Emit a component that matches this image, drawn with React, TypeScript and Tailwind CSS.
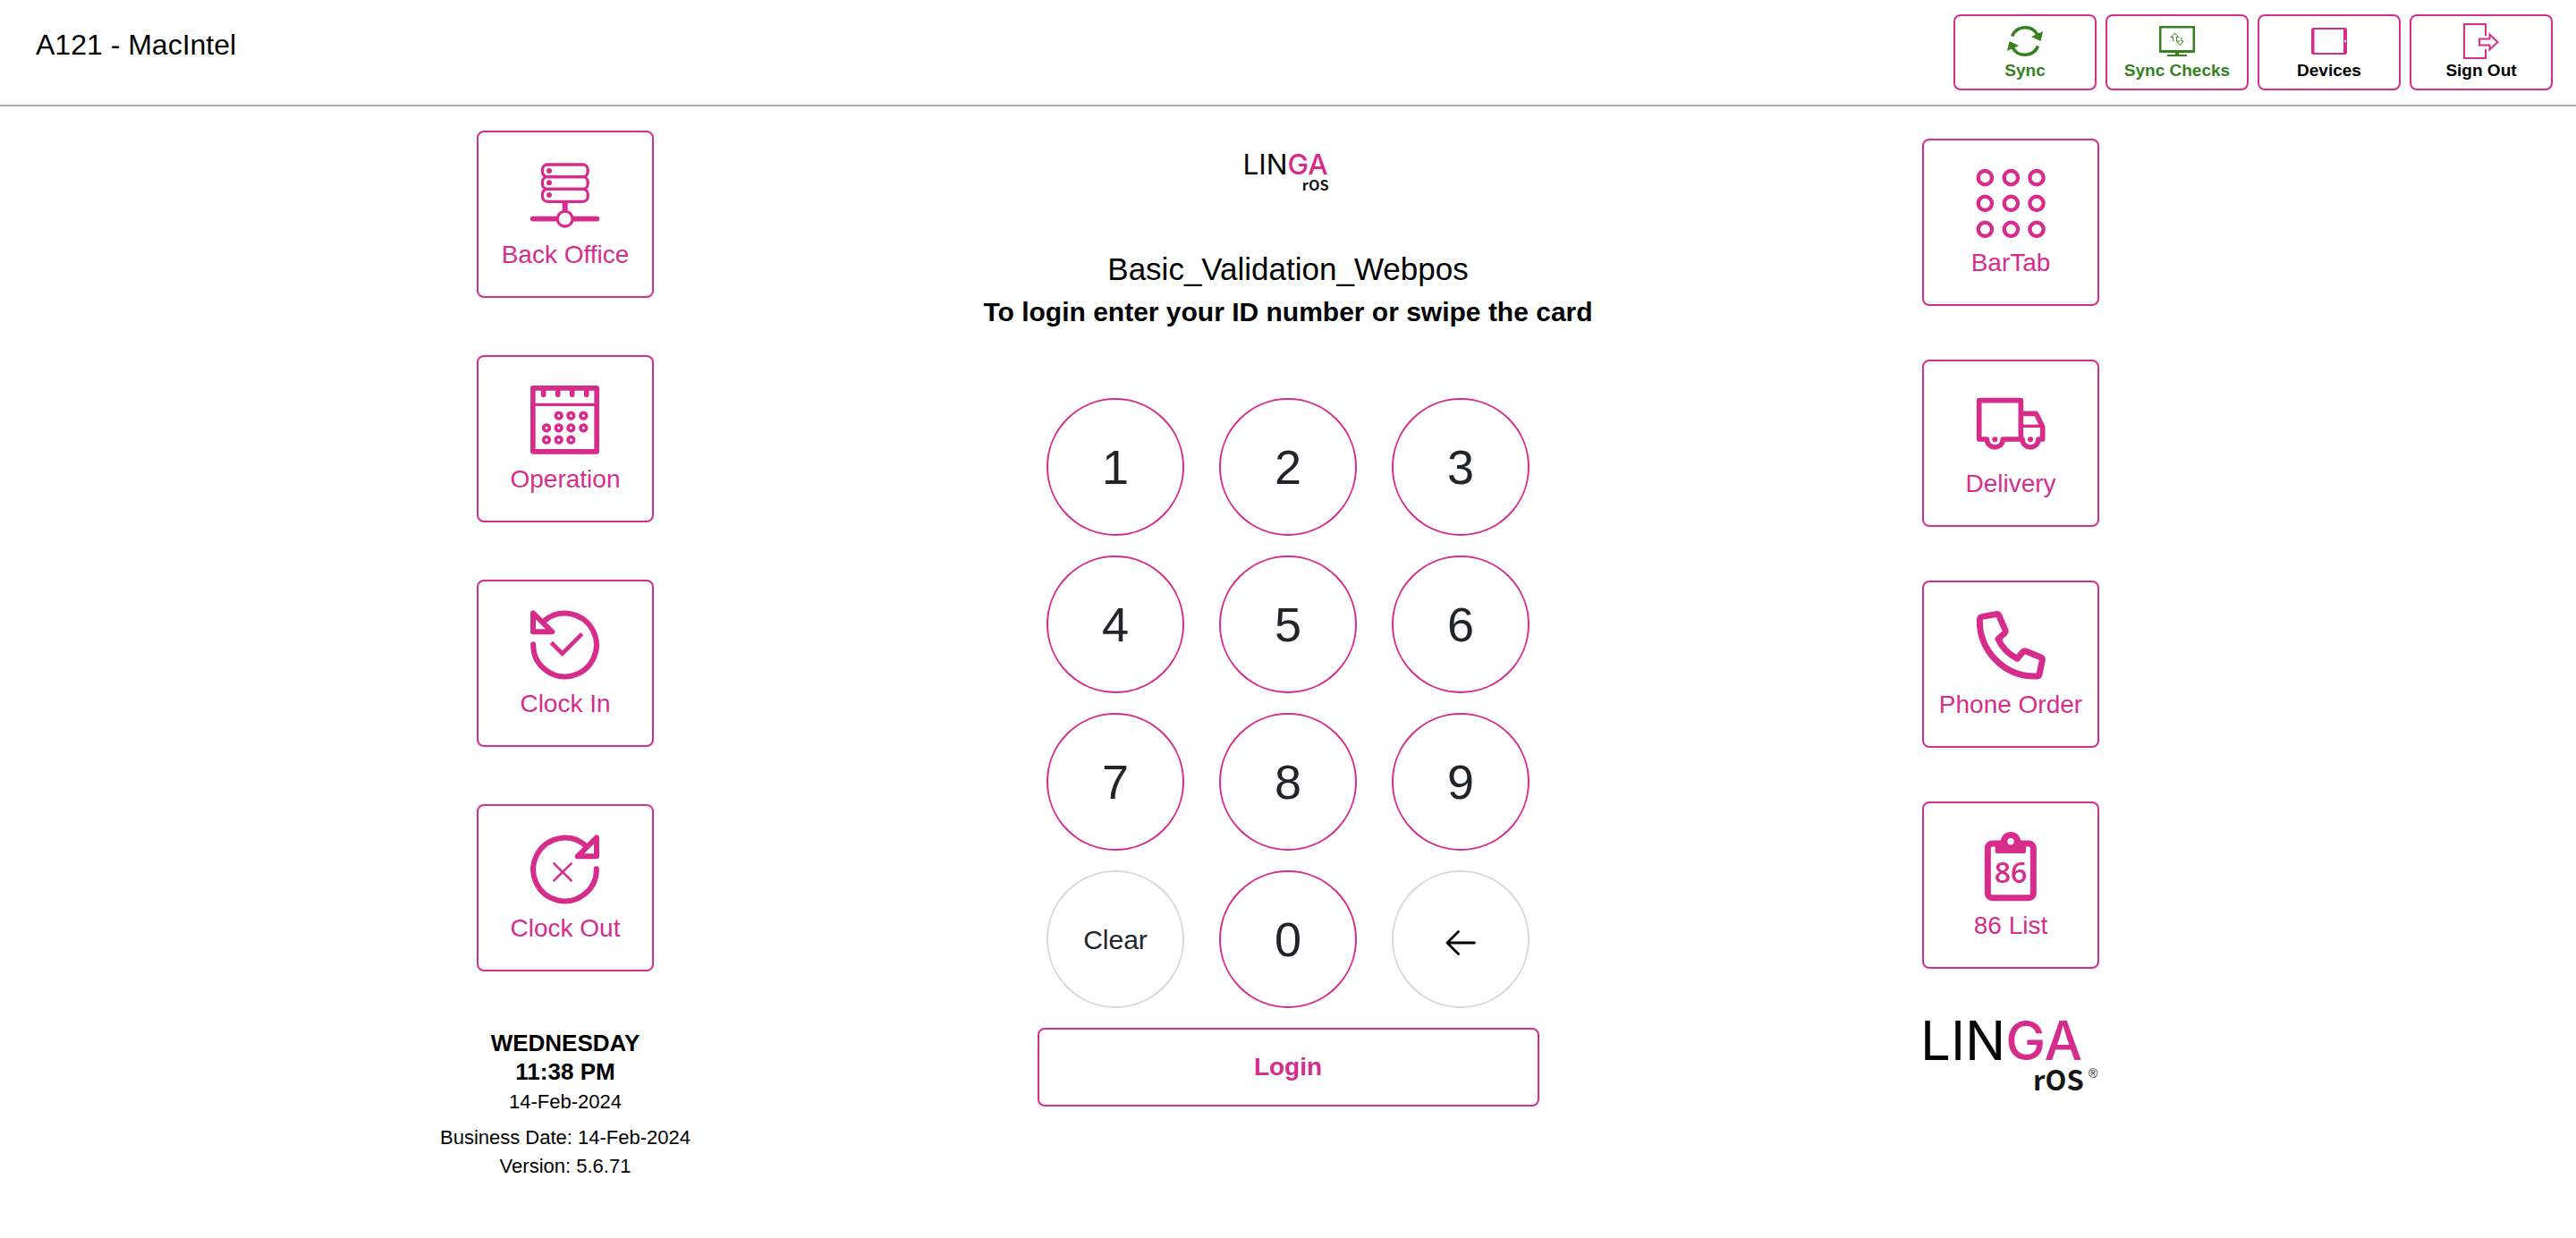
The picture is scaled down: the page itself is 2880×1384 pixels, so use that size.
import type { ReactNode } from "react";

const PINK = "#d62d8c";

function SyncIcon() {
  return (
    <svg viewBox="0 0 40 36" className="h-9 w-10" aria-hidden="true">
      <g fill="none" stroke="currentColor" strokeWidth="3.600">
        <path d="M5.500 12.500 A15.800 15.800 0 0 1 34 11" />
        <path d="M34.500 23.500 A15.800 15.800 0 0 1 6 25" />
      </g>
      <path d="M40 7 L37.500 18 L27 13 Z M0 29 L2.500 18 L13 23 Z" fill="currentColor" />
    </svg>
  );
}

function MonitorIcon() {
  return (
    <svg viewBox="0 0 40 36" className="h-9 w-10" aria-hidden="true">
      <path
        fillRule="evenodd"
        fill="currentColor"
        d="M1 1 H39 Q40 1 40 2 V30 Q40 31 39 31 H22 V33 H31 V35 H9 V33 H18 V31 H1 Q0 31 0 30 V2 Q0 1 1 1 Z M2.500 3.500 V28 H37.500 V3.500 Z"
      />
      <path
        fill="none"
        stroke="currentColor"
        strokeWidth="1"
        d="M15.500 18 V13.500 H13 L17.500 9 L21.500 13.500 H19.500 V18 H23 M19.500 13.500 V18 L23.500 22.500 L27 18 H25 V13.500"
      />
    </svg>
  );
}

function TabletIcon() {
  return (
    <svg viewBox="0 0 40 36" className="h-9 w-10" aria-hidden="true">
      <path
        fillRule="evenodd"
        fill={PINK}
        d="M2.500 3 H37.500 Q40 3 40 5.500 V30.500 Q40 33 37.500 33 H2.500 Q0 33 0 30.500 V5.500 Q0 3 2.500 3 Z M3.500 5 V31 H36 V5 Z M38 16.800 A1.200 1.200 0 1 0 38 19.200 A1.200 1.200 0 1 0 38 16.800 Z"
      />
    </svg>
  );
}

function SignOutIcon() {
  return (
    <svg viewBox="0 0 40 40" className="h-10 w-10" aria-hidden="true">
      <g fill="none" stroke={PINK} strokeWidth="2">
        <path d="M25 14 V1 H1 V39 H25 V29" />
        <path d="M18 17.500 H29.500 V12.500 L38.500 21 L29.500 29.500 V24.500 H18 Z" />
      </g>
    </svg>
  );
}

function TileSvg({ children }: { children: ReactNode }) {
  return (
    <svg viewBox="0 0 234 234" className="size-[78px]" fill="none" stroke="currentColor" aria-hidden="true">
      {children}
    </svg>
  );
}

function BackOfficeIcon() {
  return (
    <TileSvg>
      <g strokeWidth="10">
        <rect x="40.500" y="12" width="152" height="41" rx="17" />
        <rect x="40.500" y="53" width="152" height="41" rx="17" />
        <rect x="40.500" y="94" width="152" height="42" rx="17" />
        <circle cx="116" cy="194" r="25" />
      </g>
      <g fill="currentColor" stroke="none">
        <circle cx="63" cy="33" r="9" />
        <circle cx="63" cy="73" r="9" />
        <circle cx="63" cy="114" r="9" />
      </g>
      <path d="M116 138 V168" strokeWidth="18" />
      <path d="M8 194 H84 M148 194 H223" strokeWidth="17" strokeLinecap="round" />
      <circle cx="116" cy="194" r="20" fill="white" stroke="none" />
    </TileSvg>
  );
}

const calendarDays = [
  [95, 101], [136, 101], [178, 101],
  [54, 142], [95, 142], [136, 142], [178, 142],
  [54, 182], [95, 182], [136, 182],
];

function CalendarIcon() {
  return (
    <TileSvg>
      <rect x="8.500" y="8.500" width="214" height="213" strokeWidth="17" strokeLinejoin="round" />
      <path d="M10 64 H222" strokeWidth="10" />
      <path d="M44 10 V31 M92 10 V31 M140 10 V31 M188 10 V31" strokeWidth="17" strokeLinecap="round" />
      {calendarDays.map(([x, y]) => (
        <circle key={`${x}-${y}`} cx={x} cy={y} r="10" strokeWidth="11" />
      ))}
    </TileSvg>
  );
}

function ClockInIcon() {
  return (
    <TileSvg>
      <path d="M9.500 115 A106 106 0 1 0 46 37" strokeWidth="18" strokeLinecap="round" />
      <path d="M9 10 V73 H73 Z" strokeWidth="18" strokeLinejoin="round" />
      <path d="M70 109 L107 146 L173 80" strokeWidth="14" />
    </TileSvg>
  );
}

function ClockOutIcon() {
  return (
    <TileSvg>
      <path d="M221.500 115 A106 106 0 1 1 185 37" strokeWidth="18" strokeLinecap="round" />
      <path d="M222 10 V73 H158 Z" strokeWidth="18" strokeLinejoin="round" />
      <path d="M79 97 L137 154 M137 97 L79 154" strokeWidth="8" strokeLinecap="round" />
    </TileSvg>
  );
}

function BarTabIcon() {
  return (
    <TileSvg>
      {[29, 115, 202].map((y) =>
        [31, 118, 204].map((x) => <circle key={`${x}-${y}`} cx={x} cy={y} r="23" strokeWidth="13" />),
      )}
    </TileSvg>
  );
}

function TruckIcon() {
  return (
    <TileSvg>
      <path
        d="M151 165 V35 H11 V165 H37 C39 201 89 201 91 165 H156 C158 201 208 201 210 165 H224 V124 L202 79 H151"
        strokeWidth="17"
        strokeLinejoin="round"
      />
      <path d="M158 121 H222" strokeWidth="10" />
      <circle cx="64" cy="166" r="9" fill="currentColor" stroke="none" />
      <circle cx="183" cy="166" r="9" fill="currentColor" stroke="none" />
    </TileSvg>
  );
}

function PhoneIcon() {
  return (
    <TileSvg>
      <path
        d="M13 32 Q13 21 22 19 L68 11 Q75 10 78 16 L99 65 Q100 71 96 75 L75 94 C86 119 110 145 139 160 L157 138 Q162 133 168 135 L217 155 Q224 158 223 165 L213 213 Q212 219 205 219 C92 222 12 130 13 32 Z"
        strokeWidth="21"
        strokeLinejoin="round"
      />
    </TileSvg>
  );
}

function ClipboardIcon() {
  return (
    <TileSvg>
      <rect x="40" y="39" width="153" height="182" rx="15" strokeWidth="21" />
      <g fill="currentColor" stroke="none">
        <path d="M65 30 H168 V66 Q168 72 162 72 H71 Q65 72 65 66 Z" />
        <circle cx="117" cy="34" r="34" />
        <circle cx="117" cy="32" r="11" fill="white" />
        <text x="117" y="171" textAnchor="middle" fontSize="96" fontWeight="600" fontFamily="'Open Sans', 'Noto Sans', sans-serif">
          86
        </text>
      </g>
    </TileSvg>
  );
}

function Logo({ className, registered = false }: { className: string; registered?: boolean }) {
  return (
    <svg viewBox={registered ? "0 0 200 104" : "0 0 190 104"} className={className} role="img" aria-label="LINGA rOS">
      <text x="-1" y="62" fontFamily="Inter, sans-serif" fontSize="60" fontWeight="400" fill="#060808">
        LIN<tspan fill={PINK} fontWeight="500">GA</tspan>
      </text>
      <text x="125" y="96" fontFamily="'Noto Sans CJK JP', sans-serif" fontSize="31" fontWeight="700" fill="#161414">
        rOS
      </text>
      {registered && (
        <text x="187" y="82" fontFamily="'Liberation Sans', sans-serif" fontSize="14" fill="#161414">
          ®
        </text>
      )}
    </svg>
  );
}

function HeaderButton({ label, tone, icon }: { label: string; tone: string; icon: ReactNode }) {
  return (
    <button
      type="button"
      className={`flex h-[85px] w-40 flex-col items-center justify-end rounded-lg border-2 border-[#d62d8c] bg-white pb-2 ${tone}`}
    >
      <span className="flex h-10 items-center">{icon}</span>
      <span className="mt-px text-[19px] leading-6 font-bold">{label}</span>
    </button>
  );
}

function Tile({ label, icon }: { label: string; icon: ReactNode }) {
  return (
    <button
      type="button"
      className="flex h-[187px] w-[198px] flex-col items-center rounded-lg border-2 border-[#d62d8c] bg-white pt-8 text-[#d62d8c]"
    >
      {icon}
      <span className="mt-[11px] text-[28px] leading-8">{label}</span>
    </button>
  );
}

const digits = ["1", "2", "3", "4", "5", "6", "7", "8", "9"];
const keyBase = "flex size-[154px] items-center justify-center rounded-full border-2 bg-white text-[#212529]";

export default function App() {
  return (
    <div className="min-h-screen bg-white font-['Liberation_Sans',Arial,sans-serif] text-black">
      <header className="flex items-start justify-between border-b-2 border-[#b0b0b0] pt-4 pr-[26px] pb-4 pl-10">
        <h1 className="mt-3.5 text-[32px] leading-10">A121 - MacIntel</h1>
        <nav className="flex gap-[10px]" aria-label="Terminal">
          <HeaderButton label="Sync" tone="text-[#35821f]" icon={<SyncIcon />} />
          <HeaderButton label="Sync Checks" tone="text-[#35821f]" icon={<MonitorIcon />} />
          <HeaderButton label="Devices" tone="text-black" icon={<TabletIcon />} />
          <HeaderButton label="Sign Out" tone="text-black" icon={<SignOutIcon />} />
        </nav>
      </header>

      <main className="grid grid-cols-3 px-57">
        <section className="flex flex-col items-center pt-[27px]">
          <div className="flex flex-col gap-16">
            <Tile label="Back Office" icon={<BackOfficeIcon />} />
            <Tile label="Operation" icon={<CalendarIcon />} />
            <Tile label="Clock In" icon={<ClockInIcon />} />
            <Tile label="Clock Out" icon={<ClockOutIcon />} />
          </div>
          <div className="mt-16 text-center">
            <p className="text-[26px] leading-8 font-bold">WEDNESDAY</p>
            <p className="text-[26px] leading-8 font-bold">11:38 PM</p>
            <p className="mt-0.5 text-[22px] leading-8">14-Feb-2024</p>
            <p className="mt-2 text-[22px] leading-8">Business Date: 14-Feb-2024</p>
            <p className="text-[22px] leading-8">Version: 5.6.71</p>
          </div>
        </section>

        <section className="flex flex-col items-center pt-[43px]">
          <Logo className="h-[55px] w-[100px]" />
          <h2 className="mt-15 text-[35px] leading-12">Basic_Validation_Webpos</h2>
          <p className="text-[30px] leading-12 font-bold">To login enter your ID number or swipe the card</p>
          <div className="mt-18 grid grid-cols-3 gap-x-[39px] gap-y-[22px]">
            {digits.map((d) => (
              <button key={d} type="button" className={`${keyBase} border-[#d62d8c] text-[54px]`}>
                {d}
              </button>
            ))}
            <button type="button" className={`${keyBase} border-[#d9d9d9] text-[30px]`}>
              Clear
            </button>
            <button type="button" className={`${keyBase} border-[#d62d8c] text-[54px]`}>
              0
            </button>
            <button type="button" aria-label="Backspace" className={`${keyBase} border-[#d9d9d9] pt-2`}>
              <svg viewBox="0 0 34 28" className="h-7 w-[34px]" aria-hidden="true">
                <path
                  d="M14.500 1.500 L2 14 L14.500 26.500 M2 14 H32.500"
                  fill="none"
                  stroke="black"
                  strokeWidth="2.800"
                  strokeLinecap="round"
                  strokeLinejoin="round"
                />
              </svg>
            </button>
          </div>
          <button
            type="button"
            className="mt-[22px] h-[88px] w-[561px] rounded-lg border-2 border-[#d62d8c] bg-white text-[28px] font-bold text-[#d62d8c]"
          >
            Login
          </button>
        </section>

        <section className="flex flex-col items-center pt-9">
          <div className="flex flex-col gap-15">
            <Tile label="BarTab" icon={<BarTabIcon />} />
            <Tile label="Delivery" icon={<TruckIcon />} />
            <Tile label="Phone Order" icon={<PhoneIcon />} />
            <Tile label="86 List" icon={<ClipboardIcon />} />
          </div>
          <Logo className="mt-10 h-[104px] w-[200px]" registered />
        </section>
      </main>
    </div>
  );
}
